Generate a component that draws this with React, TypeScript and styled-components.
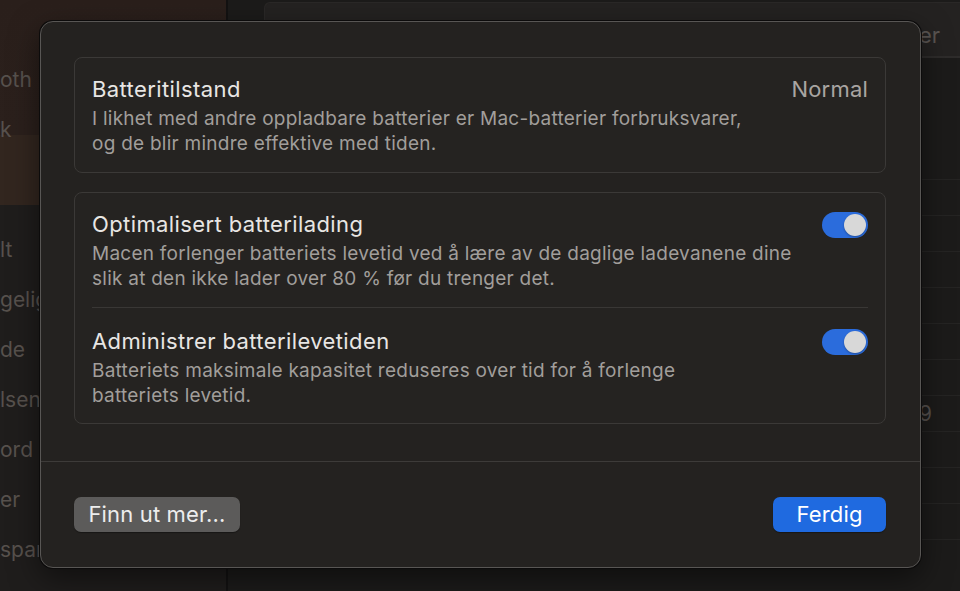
import React from "react";
import styled, { createGlobalStyle } from "styled-components";

const Global = createGlobalStyle`
  html, body { margin: 0; padding: 0; background: #1b1a19; }
  body { font-family: Inter, "Noto Sans", sans-serif; overflow: hidden; }
  * { box-sizing: border-box; }
`;

const Page = styled.div`
  position: relative;
  width: 960px;
  height: 591px;
  display: grid;
  grid-template-columns: 228px 1fr;
  overflow: hidden;
`;

const Sidebar = styled.div`
  background: linear-gradient(180deg, #2a1f1b 0px, #2b201c 135px, #32261f 135px, #32261f 205px, #1f1d1c 205px);
  border-right: 2px solid #131212;
  display: flex;
  flex-direction: column;
  padding-top: 66px;
`;

const SideItem = styled.div<{ $gap?: number }>`
  font-size: 21px;
  color: #57514d;
  height: 50px;
  line-height: 28px;
  margin-top: ${(p) => p.$gap ?? 0}px;
  white-space: nowrap;
`;

const Content = styled.div`
  display: flex;
  flex-direction: column;
  background: #1c1b1a;
`;

const TopStrip = styled.div`
  height: 58px;
  display: flex;
  padding: 2px 0 0 36px;
`;

const Header = styled.div`
  flex: 1;
  border: 1px solid #2a2827;
  border-bottom: 2px solid #2e2c2b;
  border-right: none;
  border-radius: 6px 0 0 0;
  background: #242221;
  display: flex;
  justify-content: flex-end;
  align-items: flex-end;
  padding: 0 20px 8px 0;
  font-size: 22px;
  color: #5a5552;
`;

const Rows = styled.div`
  flex: 1;
  display: flex;
  flex-direction: column;
  padding-top: 86px;
  margin-left: 36px;
`;

const Row = styled.div`
  height: 36px;
  border-bottom: 1px solid #252423;
  display: flex;
  justify-content: flex-end;
  align-items: center;
  padding-right: 28px;
  font-size: 21px;
  color: #55504d;
`;

const Overlay = styled.div`
  position: absolute;
  left: 40px;
  top: 21px;
  width: 881px;
  height: 547px;
  background: #242220;
  border: 1px solid #585654;
  border-radius: 13px;
  box-shadow: 0 0 0 1px #0c0b0b, 0 10px 30px rgba(0, 0, 0, 0.5);
  display: flex;
  flex-direction: column;
`;

const Body = styled.div`
  padding: 35px 34px 37px 33px;
  display: flex;
  flex-direction: column;
  gap: 19px;
  border-bottom: 1px solid #3d3b39;
`;

const Card = styled.div`
  border: 1px solid #3b3937;
  border-radius: 8px;
  background: #252321;
  padding: 0 17px;
  display: flex;
  flex-direction: column;
`;

const Item = styled.div<{ $divider?: boolean }>`
  display: flex;
  align-items: flex-start;
  justify-content: space-between;
  padding: ${(p) => (p.$divider ? "19px 0 15px" : "17px 0 16px")};
  border-top: ${(p) => (p.$divider ? "1px solid #393735" : "none")};
`;

const Texts = styled.div`
  display: flex;
  flex-direction: column;
`;

const Title = styled.div`
  font-size: 22px;
  line-height: 28px;
  color: #e8e6e4;
  letter-spacing: 0.4px;
`;

const Desc = styled.div`
  font-size: 19px;
  line-height: 25px;
  color: #a19e9b;
  letter-spacing: 0.25px;
  margin-top: 3px;
`;

const Status = styled.div`
  font-size: 22px;
  line-height: 28px;
  color: #a9a5a2;
  letter-spacing: 0.2px;
`;

const Toggle = styled.div<{ $on?: boolean }>`
  width: 46px;
  height: 26px;
  border-radius: 13px;
  background: ${(p) => (p.$on ? "#2b6cdc" : "#4a4846")};
  display: flex;
  align-items: center;
  justify-content: ${(p) => (p.$on ? "flex-end" : "flex-start")};
  padding: 2px;
  margin-top: 2px;
  flex-shrink: 0;
`;

const Knob = styled.div`
  width: 22px;
  height: 22px;
  border-radius: 50%;
  background: #d8d8d8;
  box-shadow: 0 1px 2px rgba(0, 0, 0, 0.3);
`;

const Footer = styled.div`
  flex: 1;
  display: flex;
  justify-content: space-between;
  align-items: flex-start;
  padding: 35px 34px 0 33px;
`;

const Button = styled.button<{ $primary?: boolean }>`
  height: 35px;
  padding: 0;
  width: ${(p) => (p.$primary ? "113px" : "166px")};
  border-radius: 7px;
  border: none;
  background: ${(p) => (p.$primary ? "#1f6ae0" : "#5c5b5a")};
  color: ${(p) => (p.$primary ? "#ffffff" : "#ededed")};
  font-family: Inter, "Noto Sans", sans-serif;
  font-size: 22px;
  letter-spacing: 0.15px;
  line-height: 35px;
  box-shadow: 0 1px 1px rgba(0, 0, 0, 0.35);
`;

const sideItems = [
  { t: "oth", g: 0 },
  { t: "k", g: 0 },
  { t: "", g: 20 },
  { t: "lt", g: 0 },
  { t: "gelig", g: 0 },
  { t: "de", g: 0 },
  { t: "lsen", g: 0 },
  { t: "ord", g: 0 },
  { t: "er", g: 0 },
  { t: "spar", g: 0 },
];

export default function App() {
  return (
    <>
      <Global />
      <Page>
        <Sidebar>
          {sideItems.map((s, i) => (
            <SideItem key={i} $gap={s.g}>
              {s.t}
            </SideItem>
          ))}
        </Sidebar>
        <Content>
          <TopStrip>
            <Header>er</Header>
          </TopStrip>
          <Rows>
            {Array.from({ length: 11 }).map((_, i) => (
              <Row key={i}>{i === 7 ? "9" : ""}</Row>
            ))}
          </Rows>
        </Content>
        <Overlay>
          <Body>
            <Card>
              <Item>
                <Texts>
                  <Title>Batteritilstand</Title>
                  <Desc>
                    I likhet med andre oppladbare batterier er Mac-batterier forbruksvarer,
                    <br />
                    og de blir mindre effektive med tiden.
                  </Desc>
                </Texts>
                <Status>Normal</Status>
              </Item>
            </Card>
            <Card>
              <Item>
                <Texts>
                  <Title>Optimalisert batterilading</Title>
                  <Desc>
                    Macen forlenger batteriets levetid ved å lære av de daglige ladevanene dine
                    <br />
                    slik at den ikke lader over 80 % før du trenger det.
                  </Desc>
                </Texts>
                <Toggle $on>
                  <Knob />
                </Toggle>
              </Item>
              <Item $divider>
                <Texts>
                  <Title>Administrer batterilevetiden</Title>
                  <Desc>
                    Batteriets maksimale kapasitet reduseres over tid for å forlenge
                    <br />
                    batteriets levetid.
                  </Desc>
                </Texts>
                <Toggle $on>
                  <Knob />
                </Toggle>
              </Item>
            </Card>
          </Body>
          <Footer>
            <Button>Finn ut mer...</Button>
            <Button $primary>Ferdig</Button>
          </Footer>
        </Overlay>
      </Page>
    </>
  );
}
